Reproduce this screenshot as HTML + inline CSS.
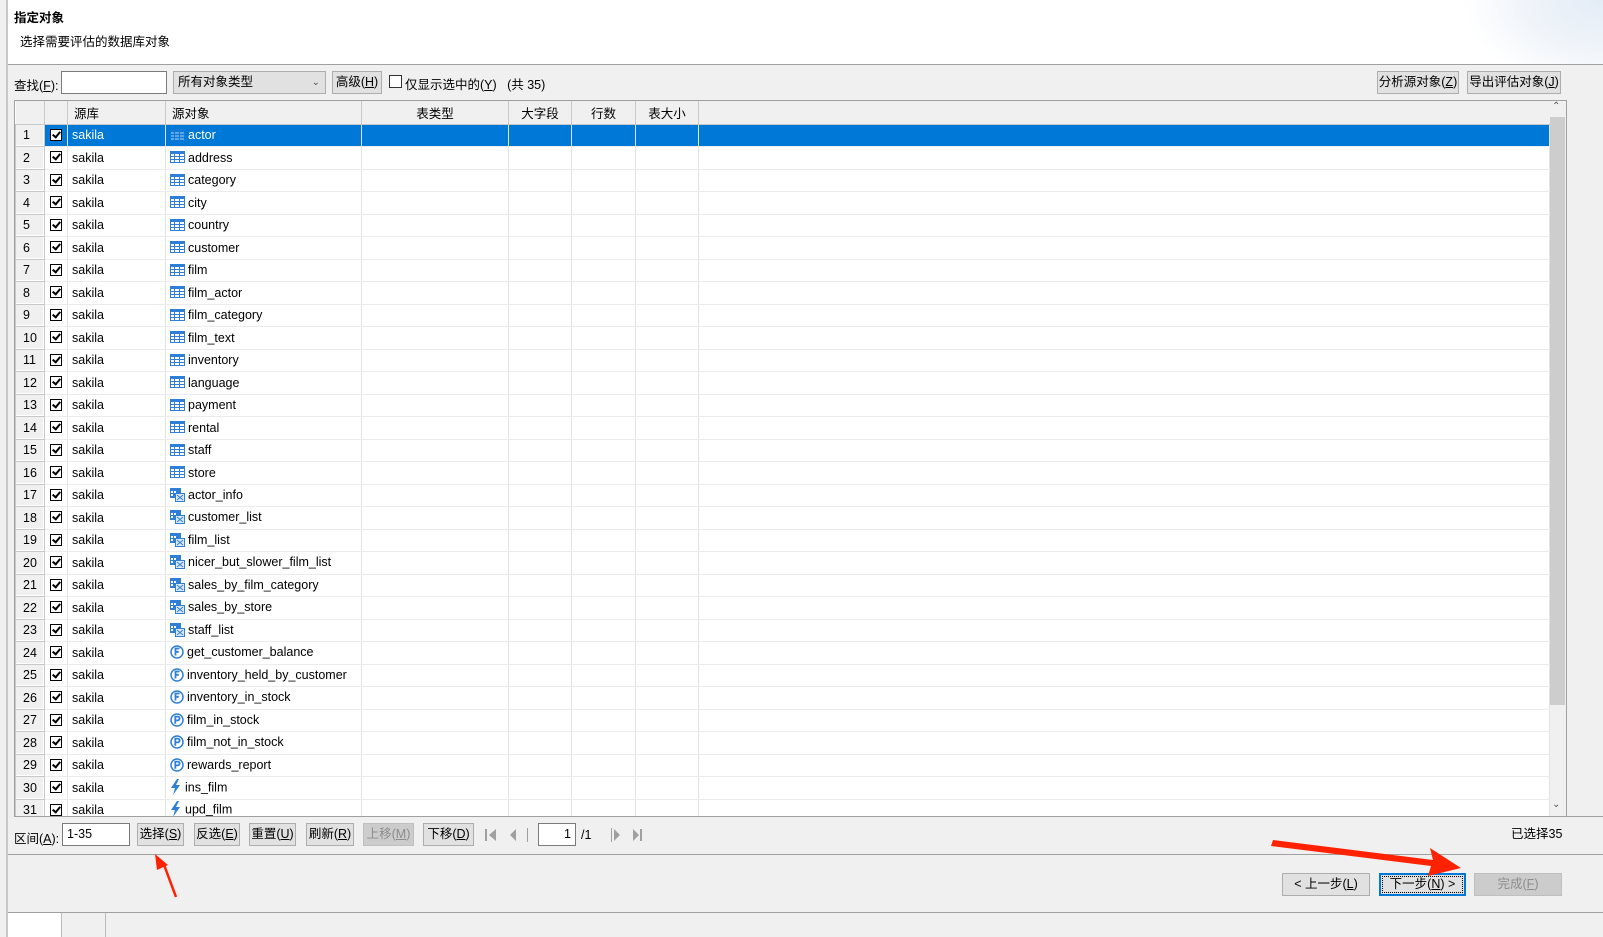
<!DOCTYPE html>
<html><head><meta charset="utf-8">
<style>
*{box-sizing:border-box;margin:0;padding:0}
body{width:1603px;height:937px;background:#f0f0f0;font-family:"Liberation Sans","Noto Sans CJK SC",sans-serif;font-size:12.5px;color:#000;position:relative;overflow:hidden}
.abs{position:absolute}
.hdr{left:8px;top:0;width:1595px;height:65px;background:#fff;border-bottom:1px solid #a0a0a0}
.vl{left:6px;top:0;width:2px;height:937px;background:#c8c8c8}
.btn{position:absolute;height:23px;border:1px solid #adadad;background:#e1e1e1;text-align:center;line-height:21px;font-size:12.5px}
.inp{position:absolute;background:#fff;border:1px solid #7a7a7a;height:23px;line-height:21px;padding-left:4px}
u{text-decoration:underline}
table{position:absolute;left:15px;top:101px;border-collapse:collapse;table-layout:fixed;background:#fff}
td,th{height:22.5px;border-right:1px solid #e3e3e3;border-bottom:1px solid #ececec;white-space:nowrap;overflow:hidden;padding:0;font-weight:normal;vertical-align:middle}
th{background:#f0f0f0;border-right:1px solid #c8c8c8;border-bottom:1px solid #c8c8c8;height:23px;text-align:left;padding-left:6px}
th.c{text-align:center;padding-left:0}
td.n{background:#f0f0f0;border:1px solid #c8c8c8;text-align:left;padding-left:7px;box-shadow:inset -1px -1px #fff}
td.k{text-align:center}
.cb{display:inline-block;width:12px;height:12px;border:1.5px solid #000;background:#fff;position:relative;vertical-align:middle;top:-1px}
.cb:after{content:"";position:absolute;left:3px;top:0px;width:3px;height:6px;border:solid #000;border-width:0 2px 2px 0;transform:rotate(40deg)}
td.s{padding-left:4px}
td.o{padding-left:4px}
tr.sel td{background:#0078d7;color:#fff}
tr.sel td.n{background:#f0f0f0;color:#000}
svg.i{vertical-align:middle;margin-right:3px;position:relative;top:-1px}
</style></head><body>
<svg width="0" height="0" style="position:absolute">
<defs>
<symbol id="t" viewBox="0 0 15 12"><rect x="0" y="0" width="15" height="12" fill="#2f7fd6"/><g fill="#fff"><rect x="1" y="3" width="3" height="2"/><rect x="5" y="3" width="4" height="2"/><rect x="10" y="3" width="4" height="2"/><rect x="1" y="6" width="3" height="2"/><rect x="5" y="6" width="4" height="2"/><rect x="10" y="6" width="4" height="2"/><rect x="1" y="9" width="3" height="2"/><rect x="5" y="9" width="4" height="2"/><rect x="10" y="9" width="4" height="2"/></g></symbol>
<symbol id="v" viewBox="0 0 15 14"><rect x="0" y="0" width="11" height="10" fill="#2f7fd6"/><g fill="#fff"><rect x="1" y="3" width="2" height="2"/><rect x="4" y="3" width="2" height="2"/><rect x="1" y="6" width="2" height="2"/></g><rect x="5" y="5" width="10" height="9" fill="#2f7fd6"/><rect x="6" y="6" width="8" height="7" fill="#dbe9f8"/><path d="M7 7l6 5M13 7l-6 5" stroke="#2f7fd6" stroke-width="1"/></symbol>
<symbol id="f" viewBox="0 0 14 14"><circle cx="7" cy="7" r="6" fill="none" stroke="#2f7fd6" stroke-width="1.5"/><path d="M5.5 10.5V3.5h4M5.5 6.8h3.3" fill="none" stroke="#2f7fd6" stroke-width="1.8"/></symbol>
<symbol id="p" viewBox="0 0 14 14"><circle cx="7" cy="7" r="6" fill="none" stroke="#2f7fd6" stroke-width="1.5"/><path d="M5.3 10.8V3.6h2.4a1.9 1.9 0 0 1 0 3.8H5.3" fill="none" stroke="#2f7fd6" stroke-width="1.8"/></symbol>
<symbol id="z" viewBox="0 0 12 16"><path d="M7 0L1 9h4l-2 7 7-10H6l3-6z" fill="#2f7fd6"/></symbol>
</defs></svg>

<div class="abs hdr"></div>
<div class="abs vl"></div>
<div class="abs" style="left:1440px;top:0;width:163px;height:64px;background:radial-gradient(ellipse 140px 90px at 100% 0%,#e3ecf6 0%,#eef3f9 50%,#fff 100%)"></div>
<div class="abs" style="left:14px;top:7px;font-weight:bold;font-size:12.5px">指定对象</div>
<div class="abs" style="left:20px;top:31px">选择需要评估的数据库对象</div>

<div class="abs" style="left:14px;top:75px">查找(<u>F</u>):</div>
<div class="inp" style="left:61px;top:71px;width:106px"></div>
<div class="btn" style="left:173px;top:71px;width:153px;text-align:left;padding-left:4px">所有对象类型<span style="position:absolute;right:5px;top:0;font-size:10px;color:#555">&#8964;</span></div>
<div class="btn" style="left:332px;top:71px;width:50px">高级(<u>H</u>)</div>
<div class="abs" style="left:389px;top:75px;width:13px;height:13px;border:1px solid #333;background:#fff"></div>
<div class="abs" style="left:405px;top:74px">仅显示选中的(<u>Y</u>) &nbsp;&nbsp;(共 35)</div>
<div class="btn" style="left:1377px;top:71px;width:82px">分析源对象(<u>Z</u>)</div>
<div class="btn" style="left:1467px;top:71px;width:94px">导出评估对象(<u>J</u>)</div>

<div class="abs" style="left:14px;top:100px;width:1553px;height:717px;border:1px solid #a0a0a0;background:#fff"></div>
<div class="abs" style="left:1549px;top:101px;width:17px;height:715px;background:#f0f0f0"></div>
<div class="abs" style="left:1550px;top:117px;width:15px;height:588px;background:#cdcdcd"></div>
<div class="abs" style="left:1552px;top:101px;font-size:10px;color:#555">&#8963;</div>
<div class="abs" style="left:1552px;top:799px;font-size:10px;color:#555">&#8964;</div>

<table>
<colgroup><col style="width:29px"><col style="width:23px"><col style="width:98px"><col style="width:196px"><col style="width:147px"><col style="width:63px"><col style="width:64px"><col style="width:63px"><col style="width:851px"></colgroup>
<tr><th></th><th></th><th>源库</th><th>源对象</th><th class="c">表类型</th><th class="c">大字段</th><th class="c">行数</th><th class="c">表大小</th><th style="border-right:0"></th></tr>
<tr class="sel"><td class="n">1</td><td class="k"><span class="cb"></span></td><td class="s">sakila</td><td class="o"><svg class="i" width="15" height="12" style="opacity:.35"><use href="#t"/></svg>actor</td><td></td><td></td><td></td><td></td><td></td></tr>
<tr><td class="n">2</td><td class="k"><span class="cb"></span></td><td class="s">sakila</td><td class="o"><svg class="i" width="15" height="12"><use href="#t"/></svg>address</td><td></td><td></td><td></td><td></td><td></td></tr>
<tr><td class="n">3</td><td class="k"><span class="cb"></span></td><td class="s">sakila</td><td class="o"><svg class="i" width="15" height="12"><use href="#t"/></svg>category</td><td></td><td></td><td></td><td></td><td></td></tr>
<tr><td class="n">4</td><td class="k"><span class="cb"></span></td><td class="s">sakila</td><td class="o"><svg class="i" width="15" height="12"><use href="#t"/></svg>city</td><td></td><td></td><td></td><td></td><td></td></tr>
<tr><td class="n">5</td><td class="k"><span class="cb"></span></td><td class="s">sakila</td><td class="o"><svg class="i" width="15" height="12"><use href="#t"/></svg>country</td><td></td><td></td><td></td><td></td><td></td></tr>
<tr><td class="n">6</td><td class="k"><span class="cb"></span></td><td class="s">sakila</td><td class="o"><svg class="i" width="15" height="12"><use href="#t"/></svg>customer</td><td></td><td></td><td></td><td></td><td></td></tr>
<tr><td class="n">7</td><td class="k"><span class="cb"></span></td><td class="s">sakila</td><td class="o"><svg class="i" width="15" height="12"><use href="#t"/></svg>film</td><td></td><td></td><td></td><td></td><td></td></tr>
<tr><td class="n">8</td><td class="k"><span class="cb"></span></td><td class="s">sakila</td><td class="o"><svg class="i" width="15" height="12"><use href="#t"/></svg>film_actor</td><td></td><td></td><td></td><td></td><td></td></tr>
<tr><td class="n">9</td><td class="k"><span class="cb"></span></td><td class="s">sakila</td><td class="o"><svg class="i" width="15" height="12"><use href="#t"/></svg>film_category</td><td></td><td></td><td></td><td></td><td></td></tr>
<tr><td class="n">10</td><td class="k"><span class="cb"></span></td><td class="s">sakila</td><td class="o"><svg class="i" width="15" height="12"><use href="#t"/></svg>film_text</td><td></td><td></td><td></td><td></td><td></td></tr>
<tr><td class="n">11</td><td class="k"><span class="cb"></span></td><td class="s">sakila</td><td class="o"><svg class="i" width="15" height="12"><use href="#t"/></svg>inventory</td><td></td><td></td><td></td><td></td><td></td></tr>
<tr><td class="n">12</td><td class="k"><span class="cb"></span></td><td class="s">sakila</td><td class="o"><svg class="i" width="15" height="12"><use href="#t"/></svg>language</td><td></td><td></td><td></td><td></td><td></td></tr>
<tr><td class="n">13</td><td class="k"><span class="cb"></span></td><td class="s">sakila</td><td class="o"><svg class="i" width="15" height="12"><use href="#t"/></svg>payment</td><td></td><td></td><td></td><td></td><td></td></tr>
<tr><td class="n">14</td><td class="k"><span class="cb"></span></td><td class="s">sakila</td><td class="o"><svg class="i" width="15" height="12"><use href="#t"/></svg>rental</td><td></td><td></td><td></td><td></td><td></td></tr>
<tr><td class="n">15</td><td class="k"><span class="cb"></span></td><td class="s">sakila</td><td class="o"><svg class="i" width="15" height="12"><use href="#t"/></svg>staff</td><td></td><td></td><td></td><td></td><td></td></tr>
<tr><td class="n">16</td><td class="k"><span class="cb"></span></td><td class="s">sakila</td><td class="o"><svg class="i" width="15" height="12"><use href="#t"/></svg>store</td><td></td><td></td><td></td><td></td><td></td></tr>
<tr><td class="n">17</td><td class="k"><span class="cb"></span></td><td class="s">sakila</td><td class="o"><svg class="i" width="15" height="14"><use href="#v"/></svg>actor_info</td><td></td><td></td><td></td><td></td><td></td></tr>
<tr><td class="n">18</td><td class="k"><span class="cb"></span></td><td class="s">sakila</td><td class="o"><svg class="i" width="15" height="14"><use href="#v"/></svg>customer_list</td><td></td><td></td><td></td><td></td><td></td></tr>
<tr><td class="n">19</td><td class="k"><span class="cb"></span></td><td class="s">sakila</td><td class="o"><svg class="i" width="15" height="14"><use href="#v"/></svg>film_list</td><td></td><td></td><td></td><td></td><td></td></tr>
<tr><td class="n">20</td><td class="k"><span class="cb"></span></td><td class="s">sakila</td><td class="o"><svg class="i" width="15" height="14"><use href="#v"/></svg>nicer_but_slower_film_list</td><td></td><td></td><td></td><td></td><td></td></tr>
<tr><td class="n">21</td><td class="k"><span class="cb"></span></td><td class="s">sakila</td><td class="o"><svg class="i" width="15" height="14"><use href="#v"/></svg>sales_by_film_category</td><td></td><td></td><td></td><td></td><td></td></tr>
<tr><td class="n">22</td><td class="k"><span class="cb"></span></td><td class="s">sakila</td><td class="o"><svg class="i" width="15" height="14"><use href="#v"/></svg>sales_by_store</td><td></td><td></td><td></td><td></td><td></td></tr>
<tr><td class="n">23</td><td class="k"><span class="cb"></span></td><td class="s">sakila</td><td class="o"><svg class="i" width="15" height="14"><use href="#v"/></svg>staff_list</td><td></td><td></td><td></td><td></td><td></td></tr>
<tr><td class="n">24</td><td class="k"><span class="cb"></span></td><td class="s">sakila</td><td class="o"><svg class="i" width="14" height="14"><use href="#f"/></svg>get_customer_balance</td><td></td><td></td><td></td><td></td><td></td></tr>
<tr><td class="n">25</td><td class="k"><span class="cb"></span></td><td class="s">sakila</td><td class="o"><svg class="i" width="14" height="14"><use href="#f"/></svg>inventory_held_by_customer</td><td></td><td></td><td></td><td></td><td></td></tr>
<tr><td class="n">26</td><td class="k"><span class="cb"></span></td><td class="s">sakila</td><td class="o"><svg class="i" width="14" height="14"><use href="#f"/></svg>inventory_in_stock</td><td></td><td></td><td></td><td></td><td></td></tr>
<tr><td class="n">27</td><td class="k"><span class="cb"></span></td><td class="s">sakila</td><td class="o"><svg class="i" width="14" height="14"><use href="#p"/></svg>film_in_stock</td><td></td><td></td><td></td><td></td><td></td></tr>
<tr><td class="n">28</td><td class="k"><span class="cb"></span></td><td class="s">sakila</td><td class="o"><svg class="i" width="14" height="14"><use href="#p"/></svg>film_not_in_stock</td><td></td><td></td><td></td><td></td><td></td></tr>
<tr><td class="n">29</td><td class="k"><span class="cb"></span></td><td class="s">sakila</td><td class="o"><svg class="i" width="14" height="14"><use href="#p"/></svg>rewards_report</td><td></td><td></td><td></td><td></td><td></td></tr>
<tr><td class="n">30</td><td class="k"><span class="cb"></span></td><td class="s">sakila</td><td class="o"><svg class="i" width="12" height="16"><use href="#z"/></svg>ins_film</td><td></td><td></td><td></td><td></td><td></td></tr>
<tr><td class="n">31</td><td class="k"><span class="cb"></span></td><td class="s">sakila</td><td class="o"><svg class="i" width="12" height="16"><use href="#z"/></svg>upd_film</td><td></td><td></td><td></td><td></td><td></td></tr>
</table>
<div class="abs" style="left:14px;top:816px;width:1589px;height:121px;background:#f0f0f0;border-top:1px solid #a0a0a0"></div>
<div class="abs" style="left:6px;top:816px;width:2px;height:121px;background:#c8c8c8"></div>

<div class="abs" style="left:14px;top:828px">区间(<u>A</u>):</div>
<div class="inp" style="left:62px;top:823px;width:68px">1-35</div>
<div class="btn" style="left:137px;top:823px;width:47px">选择(<u>S</u>)</div>
<div class="btn" style="left:194px;top:823px;width:46px">反选(<u>E</u>)</div>
<div class="btn" style="left:249px;top:823px;width:47px">重置(<u>U</u>)</div>
<div class="btn" style="left:306px;top:823px;width:48px">刷新(<u>R</u>)</div>
<div class="btn" style="left:363px;top:823px;width:51px;background:#cccccc;border-color:#bfbfbf;color:#8d8d8d">上移(<u>M</u>)</div>
<div class="btn" style="left:423px;top:823px;width:51px">下移(<u>D</u>)</div>
<svg class="abs" style="left:484px;top:827px" width="170" height="16">
<rect x="1" y="2" width="2" height="12" fill="#a0a0a0"/><path d="M12 2L5 8l7 6z" fill="#a0a0a0"/>
<path d="M32 2l-6 6 6 6z" fill="#a0a0a0"/><rect x="43" y="1" width="1" height="14" fill="#a0a0a0"/>
<rect x="127" y="1" width="1" height="14" fill="#a0a0a0"/>
<path d="M130 2l6 6-6 6z" fill="#a0a0a0"/><path d="M149 2l6 6-6 6z" fill="#a0a0a0"/><rect x="156" y="2" width="2" height="12" fill="#a0a0a0"/>
</svg>
<div class="inp" style="left:538px;top:823px;width:38px;text-align:right;padding-right:4px">1</div>
<div class="abs" style="left:581px;top:828px">/1</div>
<div class="abs" style="left:1511px;top:823px">已选择35</div>

<div class="abs" style="left:8px;top:854px;width:1595px;height:1px;background:#a0a0a0"></div>
<div class="btn" style="left:1282px;top:873px;width:88px">&lt; 上一步(<u>L</u>)</div>
<div class="btn" style="left:1379px;top:873px;width:87px;border:2px solid #0078d7;line-height:19px;outline:1px dotted #000;outline-offset:-4px">下一步(<u>N</u>) &gt;</div>
<div class="btn" style="left:1474px;top:873px;width:88px;background:#cccccc;border-color:#bfbfbf;color:#8d8d8d">完成(<u>F</u>)</div>
<div class="abs" style="left:8px;top:912px;width:1595px;height:1px;background:#a0a0a0"></div>
<div class="abs" style="left:8px;top:913px;width:53px;height:24px;background:#fff"></div>
<div class="abs" style="left:61px;top:913px;width:1px;height:24px;background:#bbb"></div>
<div class="abs" style="left:105px;top:913px;width:1px;height:24px;background:#bbb"></div>

<svg class="abs" style="left:0;top:0" width="1603" height="937">
<path d="M176 897L163 862" stroke="#ff2200" stroke-width="2.5" fill="none"/>
<path d="M155 854l2 16 11-5z" fill="#ff2200"/>
<path d="M1273 840L1433 860 L1430 848 L1461 868 L1428 876 L1431 866 L1271 846z" fill="#ff2200"/>
</svg>
</body></html>
